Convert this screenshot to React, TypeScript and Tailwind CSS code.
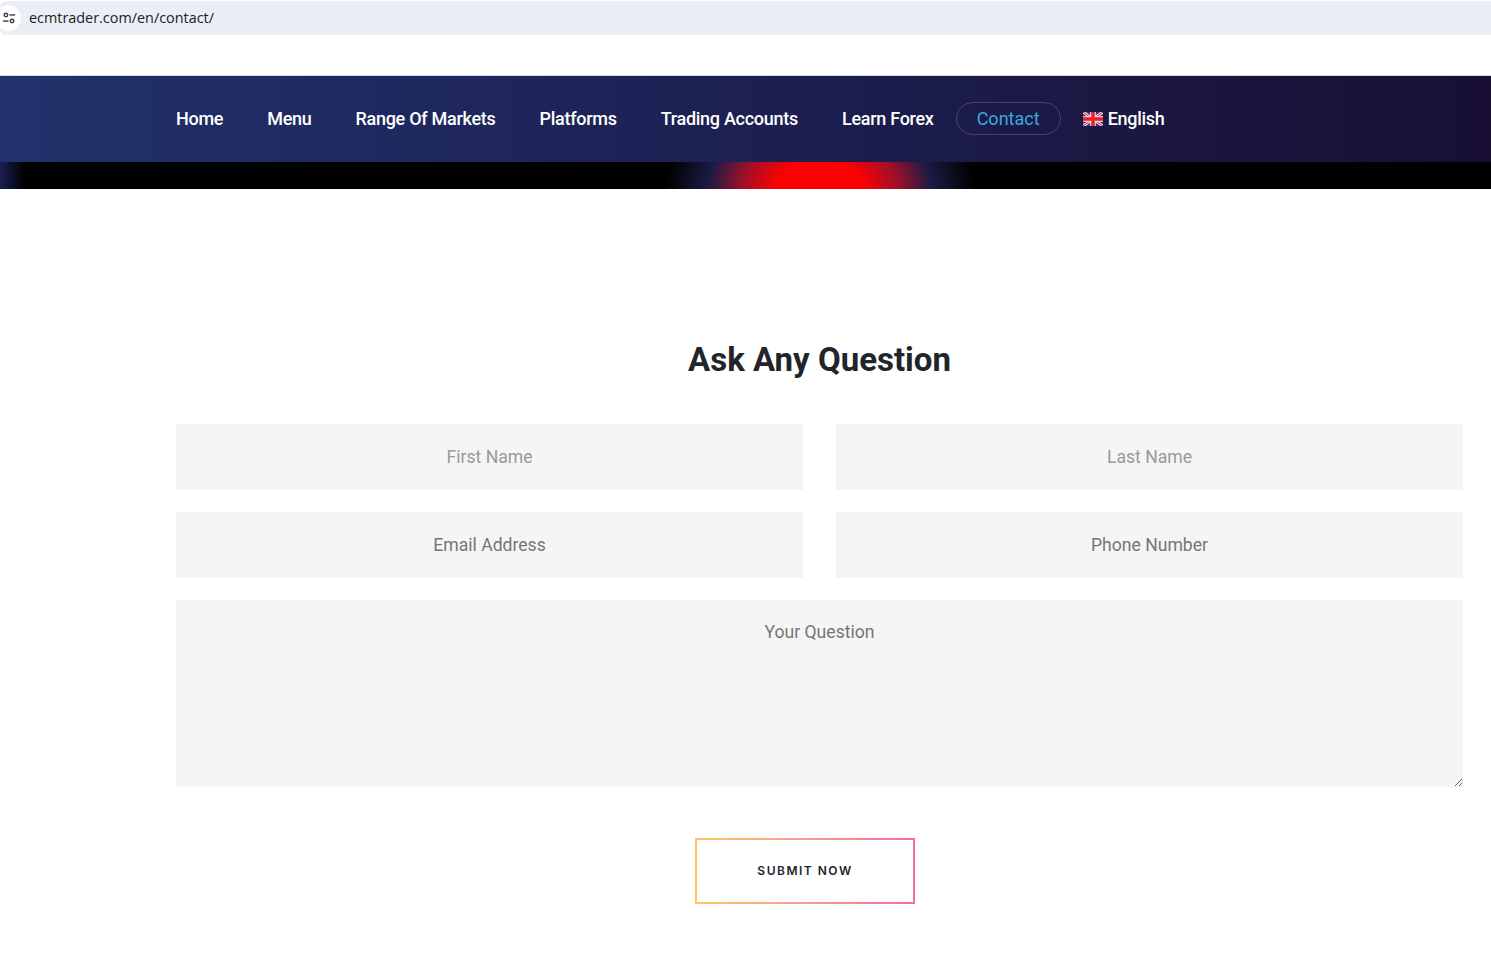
const navLinks = ["Home", "Menu", "Range Of Markets", "Platforms", "Trading Accounts", "Learn Forex"]

function TuneIcon() {
  return (
    <svg width="14" height="14" viewBox="0 0 16 16" fill="none" stroke="#3c4043" strokeWidth="1.6">
      <circle cx="4.5" cy="4.5" r="2" />
      <path d="M8.5 4.5H15" />
      <path d="M1 11.5H7.5" />
      <circle cx="11.5" cy="11.5" r="2" />
    </svg>
  )
}

function UkFlag() {
  return (
    <svg width="20" height="14" viewBox="0 0 20 14" className="mr-[5px] mt-[2px]">
      <rect width="20" height="14" fill="#2b3a8c" />
      <path d="M0 0L20 14M20 0L0 14" stroke="#f2dede" strokeWidth="3" />
      <path d="M0 0L20 14M20 0L0 14" stroke="#e0202c" strokeWidth="1" />
      <path d="M10 0V14M0 7H20" stroke="#f7e6e6" strokeWidth="5.5" />
      <path d="M10 0V14M0 7H20" stroke="#ee1c25" strokeWidth="3.5" />
    </svg>
  )
}

function Field({ label, muted }: { label: string; muted?: boolean }) {
  return (
    <input
      placeholder={label}
      className={`h-[66px] w-full bg-[#f5f5f5] text-center text-[17.6px] outline-none ${
        muted ? "placeholder:text-[#999999]" : "placeholder:text-[#757575]"
      }`}
    />
  )
}

export default function App() {
  return (
    <div className="min-h-[980px] bg-white font-['Roboto',sans-serif]">
      <div className="pt-px">
        <div className="flex h-[34px] items-center rounded-l-[6px] bg-[#eaeef7]">
          <div className="ml-[-5px] flex h-[26px] w-[26px] items-center justify-center rounded-full bg-white pl-[2px]">
            <TuneIcon />
          </div>
          <span className="ml-[8px] font-['Open_Sans',sans-serif] text-[14.4px] text-[#202124]">
            ecmtrader.com/en/contact/
          </span>
        </div>
      </div>

      <div className="mt-[40px] border-t border-[#d8dbe6]">
        <nav className="flex h-[86px] items-center bg-gradient-to-r from-[#22326c] via-[#1c2052] to-[#180f33] pb-[2px] pl-[176px]">
          <div className="flex items-center gap-[44px]">
            {navLinks.map((link) => (
              <a key={link} className="text-[18px] font-medium tracking-[-0.28px] text-white">
                {link}
              </a>
            ))}
          </div>
          <a className="ml-[22px] flex h-[33px] w-[105px] items-center justify-center rounded-full border border-[#45456b] text-[18px] text-[#35aadf]">
            Contact
          </a>
          <div className="ml-[22px] flex items-center text-[18px] font-medium tracking-[-0.28px] text-white">
            <UkFlag />
            English
          </div>
        </nav>
        <div className="h-[27px] bg-[radial-gradient(ellipse_155px_110px_at_820px_100%,#ff0000_0%,#ff0000_27%,#a00f28_50%,#1b1b45_72%,#000000_100%),linear-gradient(to_right,#1a2050_0px,#000000_25px)] bg-blend-screen" />
      </div>

      <main className="pl-[176px] pr-[28px]">
        <h1 className="mt-[151px] text-center text-[33px] font-bold leading-[40px] text-[#212529]">
          Ask Any Question
        </h1>
        <form className="mt-[44px]">
          <div className="grid grid-cols-2 gap-x-[33px] gap-y-[22px]">
            <Field label="First Name" muted />
            <Field label="Last Name" muted />
            <Field label="Email Address" />
            <Field label="Phone Number" />
          </div>
          <textarea
            placeholder="Your Question"
            className="mt-[22px] block h-[187px] w-full bg-[#f5f5f5] pt-[20px] text-center text-[17.6px] leading-[24px] outline-none placeholder:text-[#757575]"
          />
          <div className="ml-[519px] mt-[51px] h-[66px] w-[220px] bg-gradient-to-r from-[#fbc765] to-[#ee6f9f] p-[2px]">
            <button
              type="button"
              className="flex h-full w-full items-center justify-center bg-white font-['Inter',sans-serif] text-[12px] font-semibold tracking-[1.5px] text-[#212529]"
            >
              SUBMIT NOW
            </button>
          </div>
        </form>
      </main>
    </div>
  )
}
